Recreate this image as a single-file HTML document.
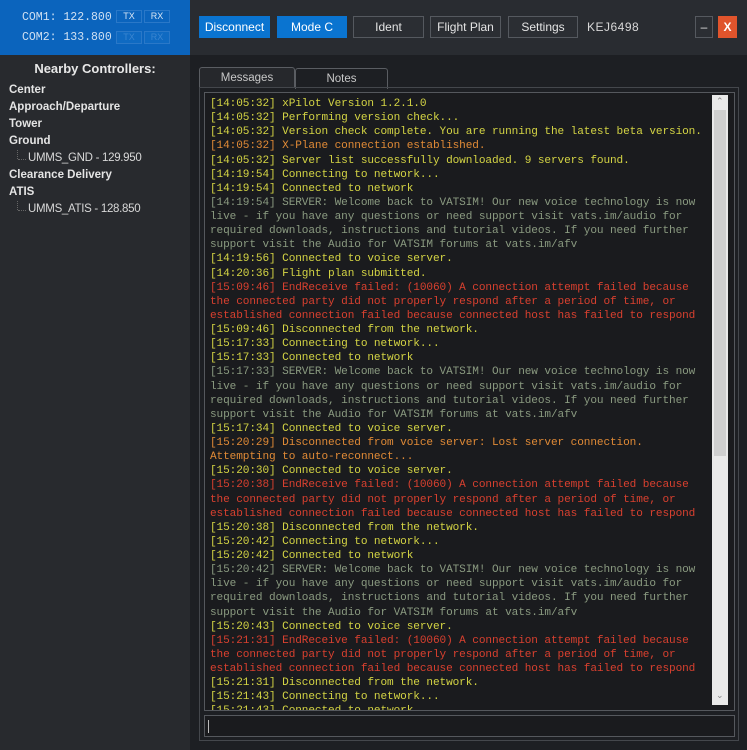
<!DOCTYPE html>
<html><head><meta charset="utf-8">
<style>
*{margin:0;padding:0;box-sizing:border-box}
body{width:747px;height:750px;background:#1d1f23;font-family:"Liberation Sans",sans-serif;position:relative;overflow:hidden}
#com{position:absolute;left:0;top:0;width:190px;height:55px;background:#0b64bd}
.cl{position:absolute;left:22px;font:11.5px "Liberation Mono",monospace;color:#cfe0f2}
.tx{position:absolute;width:26px;height:13px;border:1px solid #2a78c8;font-size:9px;color:#d8e6f5;text-align:center;line-height:11px}
#side{position:absolute;left:0;top:55px;width:190px;height:695px;background:#282a2e}
#side h3{font-size:13px;color:#e8e8e8;text-align:center;margin-top:6px;font-weight:bold}
.it{position:absolute;left:9px;font-size:11.5px;font-weight:bold;color:#e4e4e4}
.sub{position:absolute;left:28px;font-size:11.5px;color:#d8d8d8;letter-spacing:-0.3px}
.ln{position:absolute;left:17px;width:1px;border-left:1px dotted #666}
.lh{position:absolute;left:18px;width:8px;border-top:1px dotted #666}
#top{position:absolute;left:190px;top:0;width:557px;height:55px;background:#292c31}
.b{position:absolute;top:16px;height:22px;border:1px solid #55595f;color:#e4e4e4;font-size:12px;text-align:center;line-height:20px;background:#2b2e33}
.b.bl{background:#0a74d0;border-color:#0a74d0;color:#fff}
#tabs .t{position:absolute;top:67px;height:21px;font-size:11.5px;color:#c8c8c8;text-align:center;line-height:20px;border:1px solid #5a5d62;border-bottom:none;border-radius:3px 3px 0 0}
#panel{position:absolute;left:199px;top:87px;width:540px;height:654px;border:1px solid #44474c}
#msg{position:absolute;left:204px;top:92px;width:531px;height:619px;border:1px solid #55585d;background:#1a1b1e;overflow:hidden}
#txt{position:absolute;left:5px;top:4px;font:11.1px/14.12px "Liberation Mono",monospace;letter-spacing:-0.1px;white-space:pre;color:#d4d444}
.o{color:#e08a36}.g{color:#8a9a80}.r{color:#d8402f}
#sb{position:absolute;left:712px;top:95px;width:16px;height:610px;background:#e9e9e9}
#th{position:absolute;left:714px;top:110px;width:12px;height:346px;background:#cfcfcf}
#inp{position:absolute;left:204px;top:715px;width:531px;height:22px;border:1px solid #55585d;background:#1a1b1e}
</style></head><body>
<div id="com">
<div class="cl" style="top:11px">COM1: 122.800</div>
<div class="cl" style="top:31px">COM2: 133.800</div>
<div class="tx" style="left:116px;top:10px">TX</div><div class="tx" style="left:144px;top:10px">RX</div>
<div class="tx" style="left:116px;top:31px;color:#3a85d0;background:#0f6ac2">TX</div><div class="tx" style="left:144px;top:31px;color:#3a85d0;background:#0f6ac2">RX</div>
</div>
<div id="side">
<h3>Nearby Controllers:</h3>
<div class="it" style="top:29px">Center</div>
<div class="it" style="top:46px">Approach/Departure</div>
<div class="it" style="top:63px">Tower</div>
<div class="it" style="top:80px">Ground</div>
<div class="ln" style="top:95px;height:9px"></div><div class="lh" style="top:104px"></div>
<div class="sub" style="top:97px">UMMS_GND - 129.950</div>
<div class="it" style="top:114px">Clearance Delivery</div>
<div class="it" style="top:131px">ATIS</div>
<div class="ln" style="top:146px;height:9px"></div><div class="lh" style="top:155px"></div>
<div class="sub" style="top:148px">UMMS_ATIS - 128.850</div>
</div>
<div id="top"></div>
<div class="b bl" style="left:199px;width:71px">Disconnect</div>
<div class="b bl" style="left:277px;width:70px">Mode C</div>
<div class="b" style="left:353px;width:71px">Ident</div>
<div class="b" style="left:430px;width:71px">Flight Plan</div>
<div class="b" style="left:508px;width:70px">Settings</div>
<div style="position:absolute;left:587px;top:20px;font-size:12px;color:#d8d8d8;letter-spacing:0.5px">KEJ6498</div>
<div class="b" style="left:695px;width:18px">–</div>
<div class="b" style="left:718px;width:19px;background:#e0542c;border-color:#e0542c;color:#fff;font-weight:bold">X</div>
<div id="tabs"><div class="t" style="left:199px;width:96px;background:#26282c">Messages</div><div class="t" style="left:295px;width:93px;top:68px">Notes</div></div>
<div id="panel"></div>
<div id="msg"><div id="txt">[14:05:32] xPilot Version 1.2.1.0
[14:05:32] Performing version check...
[14:05:32] Version check complete. You are running the latest beta version.
<span class="o">[14:05:32] X-Plane connection established.</span>
[14:05:32] Server list successfully downloaded. 9 servers found.
[14:19:54] Connecting to network...
[14:19:54] Connected to network
<span class="g">[14:19:54] SERVER: Welcome back to VATSIM! Our new voice technology is now
live - if you have any questions or need support visit vats.im/audio for
required downloads, instructions and tutorial videos. If you need further
support visit the Audio for VATSIM forums at vats.im/afv</span>
[14:19:56] Connected to voice server.
[14:20:36] Flight plan submitted.
<span class="r">[15:09:46] EndReceive failed: (10060) A connection attempt failed because
the connected party did not properly respond after a period of time, or
established connection failed because connected host has failed to respond</span>
[15:09:46] Disconnected from the network.
[15:17:33] Connecting to network...
[15:17:33] Connected to network
<span class="g">[15:17:33] SERVER: Welcome back to VATSIM! Our new voice technology is now
live - if you have any questions or need support visit vats.im/audio for
required downloads, instructions and tutorial videos. If you need further
support visit the Audio for VATSIM forums at vats.im/afv</span>
[15:17:34] Connected to voice server.
<span class="o">[15:20:29] Disconnected from voice server: Lost server connection.
Attempting to auto-reconnect...</span>
[15:20:30] Connected to voice server.
<span class="r">[15:20:38] EndReceive failed: (10060) A connection attempt failed because
the connected party did not properly respond after a period of time, or
established connection failed because connected host has failed to respond</span>
[15:20:38] Disconnected from the network.
[15:20:42] Connecting to network...
[15:20:42] Connected to network
<span class="g">[15:20:42] SERVER: Welcome back to VATSIM! Our new voice technology is now
live - if you have any questions or need support visit vats.im/audio for
required downloads, instructions and tutorial videos. If you need further
support visit the Audio for VATSIM forums at vats.im/afv</span>
[15:20:43] Connected to voice server.
<span class="r">[15:21:31] EndReceive failed: (10060) A connection attempt failed because
the connected party did not properly respond after a period of time, or
established connection failed because connected host has failed to respond</span>
[15:21:31] Disconnected from the network.
[15:21:43] Connecting to network...
[15:21:43] Connected to network</div></div>
<div id="sb"></div><div id="th"></div>
<div style="position:absolute;left:716px;top:96px;font-size:9px;color:#888">&#8963;</div>
<div style="position:absolute;left:716px;top:690px;font-size:9px;color:#888">&#8964;</div>
<div id="inp"><div style="position:absolute;left:3px;top:4px;width:1px;height:13px;background:#bbb"></div></div>
</body></html>
